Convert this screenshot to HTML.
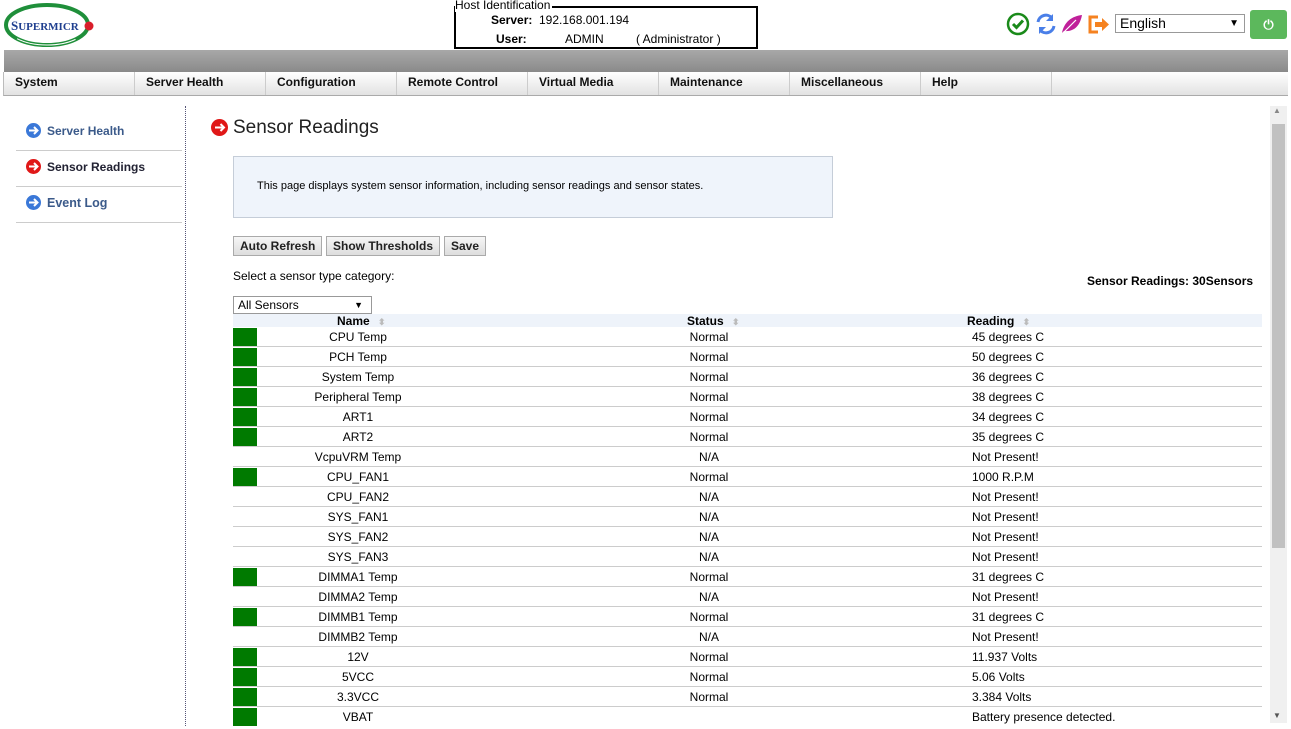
<!DOCTYPE html>
<html><head><meta charset="utf-8"><style>
*{margin:0;padding:0;box-sizing:border-box}
body{width:1291px;height:729px;overflow:hidden;background:#fff;font-family:"Liberation Sans",Arial,sans-serif;font-size:12px;color:#000;position:relative}
.a{position:absolute}
.nav{left:4px;top:50px;width:1284px;height:22px;background:linear-gradient(#a8a8a8,#8a8a8a)}
.menu{left:3px;top:72px;width:1285px;height:24px;background:linear-gradient(#fff,#e2e2e2);border-bottom:1px solid #aaa;border-left:1px solid #bbb}
.menu div{position:absolute;top:0;height:23px;width:131px;border-right:1px solid #ccc;font-weight:bold;font-size:12px;line-height:21px;padding-left:11px;color:#111}
.side{left:16px;width:166px;height:36px;border-bottom:1px solid #ccc;font-weight:bold;font-size:12px;color:#3b5a8a}
.side span{position:absolute;left:31px;top:9px}
.ic{position:absolute;left:10px;top:8px;width:15px;height:15px;border-radius:50%}
.row{position:absolute;left:233px;width:1029px;height:20px;border-bottom:1px solid #ccc}
.row .g{position:absolute;left:0;top:1px;width:24px;height:18px;background:#007a00}
.row .n{position:absolute;left:0;width:250px;text-align:center;top:3px}
.row .s{position:absolute;left:376px;width:200px;text-align:center;top:3px}
.row .r{position:absolute;left:739px;top:3px}
.btn{position:absolute;top:236px;height:20px;border:1px solid #aaa;background:linear-gradient(#f6f6f6,#ddd);font-weight:bold;font-size:12px;line-height:18px;padding:0 6px;color:#222}
</style></head><body>
<svg class="a" style="left:3px;top:2px" width="92" height="46" viewBox="0 0 92 46">
<ellipse cx="44" cy="23" rx="41" ry="20" fill="none" stroke="#1f8f3a" stroke-width="4"/>
<ellipse cx="44" cy="23" rx="41" ry="20" fill="none" stroke="#fff" stroke-width="1" stroke-dasharray="60 200" stroke-dashoffset="-20"/>
<text x="8" y="28" font-family="Liberation Serif,serif" font-size="13" fill="#1f3f8f" font-weight="bold">S<tspan font-size="11">UPERMICR</tspan></text>
<circle cx="86" cy="24" r="4.5" fill="#d91e2a"/>
</svg>
<div class="a" style="left:454px;top:6px;width:304px;height:43px;border:2px solid #000"></div>
<div class="a" style="left:455px;top:-2px;background:#fff;font-size:12px;padding-right:2px">Host Identification</div>
<div class="a" style="left:491px;top:13px;font-weight:bold">Server:</div>
<div class="a" style="left:539px;top:13px">192.168.001.194</div>
<div class="a" style="left:496px;top:32px;font-weight:bold">User:</div>
<div class="a" style="left:565px;top:32px">ADMIN</div>
<div class="a" style="left:636px;top:32px">( Administrator )</div>
<svg class="a" style="left:1006px;top:12px" width="106" height="24" viewBox="0 0 106 24">
<circle cx="12" cy="12" r="10" fill="none" stroke="#1a8a1a" stroke-width="2.5"/>
<path d="M7 12l3.5 3.5L17 8.5" fill="none" stroke="#1a8a1a" stroke-width="3"/>
<path d="M32 10a8 8 0 0 1 14-4" fill="none" stroke="#4a7fe8" stroke-width="3"/><path d="M47 2v7h-7z" fill="#4a7fe8"/>
<path d="M48 14a8 8 0 0 1-14 4" fill="none" stroke="#4a7fe8" stroke-width="3"/><path d="M33 22v-7h7z" fill="#4a7fe8"/>
<path d="M56 21C58 10 66 4 76 3C74 14 68 20 58 19Z" fill="#c0209a"/><path d="M55 23L70 8" stroke="#fff" stroke-width="1.2"/>
<path d="M92 5h-8v15h8" fill="none" stroke="#f58220" stroke-width="3"/><path d="M89 10h7v-4l7 6.5-7 6.5v-4h-7z" fill="#f58220"/>
</svg>
<div class="a" style="left:1115px;top:14px;width:130px;height:19px;border:1px solid #999;font-size:14px;line-height:17px;padding-left:4px">English<span style="position:absolute;right:5px;font-size:10px">▼</span></div>
<div class="a" style="left:1250px;top:10px;width:37px;height:29px;background:#5cb85c;border-radius:3px;color:#fff;text-align:center;line-height:29px;font-size:13px;font-weight:bold">⏻</div>
<div class="a nav"></div>
<div class="a menu">
<div style="left:0">System</div><div style="left:131px">Server Health</div><div style="left:262px">Configuration</div><div style="left:393px">Remote Control</div><div style="left:524px">Virtual Media</div><div style="left:655px">Maintenance</div><div style="left:786px">Miscellaneous</div><div style="left:917px">Help</div><div style="left:1048px;width:236px;border-right:none"></div>
</div>
<div class="a side" style="top:115px"><div class="ic" style="background:#3a78d8"></div><span>Server Health</span></div>
<div class="a side" style="top:151px;color:#223"><div class="ic" style="background:#e01818"></div><span>Sensor Readings</span></div>
<div class="a side" style="top:187px"><div class="ic" style="background:#3a78d8"></div><span style="font-size:12.5px">Event Log</span></div>
<svg class="a" style="left:26px;top:123px" width="15" height="90"><g fill="none" stroke="#fff" stroke-width="2"><path d="M3 7.5h8M8 4l3.5 3.5L8 11"/><path d="M3 43.5h8M8 40l3.5 3.5L8 47"/><path d="M3 79.5h8M8 76l3.5 3.5L8 83"/></g></svg>
<div class="a" style="left:185px;top:106px;height:620px;border-left:1px dotted #557"></div>
<div class="a" style="left:211px;top:119px;width:17px;height:17px;border-radius:50%;background:#e01818"></div>
<svg class="a" style="left:211px;top:119px" width="17" height="17"><path d="M4 8.5h9M9.5 5l3.5 3.5L9.5 12" fill="none" stroke="#fff" stroke-width="2"/></svg>
<div class="a" style="left:233px;top:117px;font-size:19px;color:#222">Sensor Readings</div>
<div class="a" style="left:233px;top:156px;width:600px;height:62px;background:#eff4fb;border:1px solid #c5cdd8"></div>
<div class="a" style="left:257px;top:180px;font-size:11px">This page displays system sensor information, including sensor readings and sensor states.</div>
<div class="btn" style="left:233px">Auto Refresh</div>
<div class="btn" style="left:326px">Show Thresholds</div>
<div class="btn" style="left:444px">Save</div>
<div class="a" style="left:233px;top:269px">Select a sensor type category:</div>
<div class="a" style="left:1087px;top:274px;font-weight:bold">Sensor Readings: 30Sensors</div>
<div class="a" style="left:233px;top:296px;width:139px;height:18px;border:1px solid #999;line-height:16px;padding-left:4px">All Sensors<span style="position:absolute;right:8px;font-size:9px">▼</span></div>
<div class="a" style="left:233px;top:314px;width:1029px;height:13px;background:#eef3fa"></div>
<div class="a" style="left:337px;top:314px;font-weight:bold">Name <span style="color:#bbb;font-size:9px;margin-left:5px">⬍</span></div>
<div class="a" style="left:687px;top:314px;font-weight:bold">Status <span style="color:#bbb;font-size:9px;margin-left:5px">⬍</span></div>
<div class="a" style="left:967px;top:314px;font-weight:bold">Reading <span style="color:#bbb;font-size:9px;margin-left:5px">⬍</span></div>
<div class="row" style="top:327px"><div class="g"></div><div class="n">CPU Temp</div><div class="s">Normal</div><div class="r">45 degrees C</div></div>
<div class="row" style="top:347px"><div class="g"></div><div class="n">PCH Temp</div><div class="s">Normal</div><div class="r">50 degrees C</div></div>
<div class="row" style="top:367px"><div class="g"></div><div class="n">System Temp</div><div class="s">Normal</div><div class="r">36 degrees C</div></div>
<div class="row" style="top:387px"><div class="g"></div><div class="n">Peripheral Temp</div><div class="s">Normal</div><div class="r">38 degrees C</div></div>
<div class="row" style="top:407px"><div class="g"></div><div class="n">ART1</div><div class="s">Normal</div><div class="r">34 degrees C</div></div>
<div class="row" style="top:427px"><div class="g"></div><div class="n">ART2</div><div class="s">Normal</div><div class="r">35 degrees C</div></div>
<div class="row" style="top:447px"><div class="n">VcpuVRM Temp</div><div class="s">N/A</div><div class="r">Not Present!</div></div>
<div class="row" style="top:467px"><div class="g"></div><div class="n">CPU_FAN1</div><div class="s">Normal</div><div class="r">1000 R.P.M</div></div>
<div class="row" style="top:487px"><div class="n">CPU_FAN2</div><div class="s">N/A</div><div class="r">Not Present!</div></div>
<div class="row" style="top:507px"><div class="n">SYS_FAN1</div><div class="s">N/A</div><div class="r">Not Present!</div></div>
<div class="row" style="top:527px"><div class="n">SYS_FAN2</div><div class="s">N/A</div><div class="r">Not Present!</div></div>
<div class="row" style="top:547px"><div class="n">SYS_FAN3</div><div class="s">N/A</div><div class="r">Not Present!</div></div>
<div class="row" style="top:567px"><div class="g"></div><div class="n">DIMMA1 Temp</div><div class="s">Normal</div><div class="r">31 degrees C</div></div>
<div class="row" style="top:587px"><div class="n">DIMMA2 Temp</div><div class="s">N/A</div><div class="r">Not Present!</div></div>
<div class="row" style="top:607px"><div class="g"></div><div class="n">DIMMB1 Temp</div><div class="s">Normal</div><div class="r">31 degrees C</div></div>
<div class="row" style="top:627px"><div class="n">DIMMB2 Temp</div><div class="s">N/A</div><div class="r">Not Present!</div></div>
<div class="row" style="top:647px"><div class="g"></div><div class="n">12V</div><div class="s">Normal</div><div class="r">11.937 Volts</div></div>
<div class="row" style="top:667px"><div class="g"></div><div class="n">5VCC</div><div class="s">Normal</div><div class="r">5.06 Volts</div></div>
<div class="row" style="top:687px"><div class="g"></div><div class="n">3.3VCC</div><div class="s">Normal</div><div class="r">3.384 Volts</div></div>
<div class="row" style="top:707px;border:none"><div class="g"></div><div class="n">VBAT</div><div class="s"></div><div class="r">Battery presence detected.</div></div>
<div class="a" style="left:1270px;top:106px;width:17px;height:617px;background:#f0f0f0"></div>
<div class="a" style="left:1272px;top:124px;width:13px;height:424px;background:#c1c1c1"></div>
<div class="a" style="left:1273px;top:106px;font-size:8px;color:#888">▲</div>
<div class="a" style="left:1273px;top:711px;font-size:8px;color:#555">▼</div>
</body></html>
